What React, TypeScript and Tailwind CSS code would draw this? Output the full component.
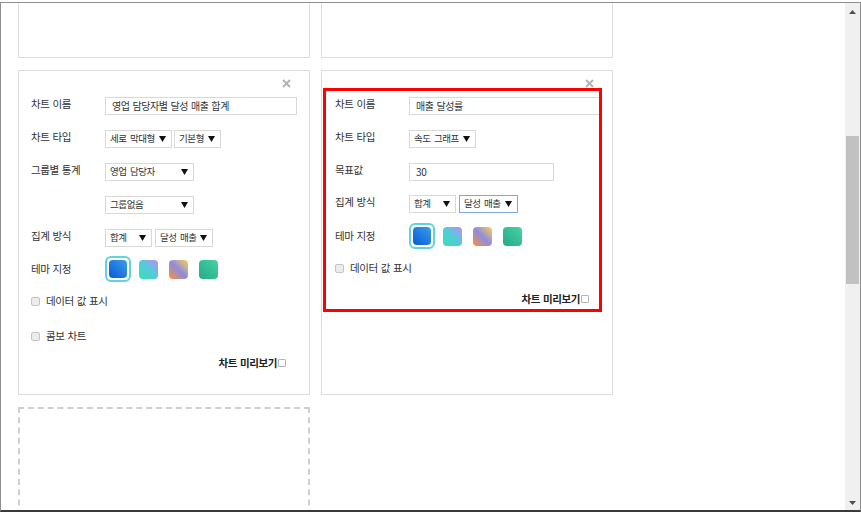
import clsx from 'clsx';

const font = { fontFamily: '"Noto Sans CJK KR", "Noto Sans", sans-serif' };

const Caret = () => (
  <svg width="7" height="6" viewBox="0 0 7 6" className="shrink-0">
    <polygon points="0,0 7,0 3.5,6" fill="#111" />
  </svg>
);

const Select: React.FC<{ w: string; label: string; focus?: boolean }> = ({ w, label, focus }) => (
  <div
    className={clsx(
      'h-[18px] flex items-center justify-between pl-[4px] pr-[5px] text-[9.5px] tracking-[-0.4px] [word-spacing:1.5px] text-[#333] bg-white border',
      focus ? 'border-[#7ea6e6]' : 'border-[#d8d8d8]',
      w,
    )}
  >
    <span className="leading-none whitespace-nowrap">{label}</span>
    <Caret />
  </div>
);

const TextInput: React.FC<{ w: string; value: string }> = ({ w, value }) => (
  <div
    className={clsx(
      'h-[18px] flex items-center pl-[6px] text-[10px] tracking-[-0.4px] [word-spacing:1px] text-[#333] border border-[#d8d8d8] bg-white',
      w,
    )}
  >
    <span className="leading-none whitespace-nowrap">{value}</span>
  </div>
);

const Row: React.FC<{ label?: string; className?: string; gap?: string; children: React.ReactNode }> = ({
  label,
  className,
  gap = 'gap-[2px]',
  children,
}) => (
  <div className={clsx('flex flex-row items-start', className)}>
    <span className="w-[74px] shrink-0 text-[10.5px] tracking-[-0.4px] [word-spacing:1px] leading-[14px] text-[#333]">
      {label}
    </span>
    <div className={clsx('flex flex-row', gap)}>{children}</div>
  </div>
);

const Swatches = () => (
  <div className="flex flex-row items-center">
    <div className="w-[26px] h-[26px] rounded-[6px] border-2 border-[#5fd3df] flex items-center justify-center">
      <div className="w-[18px] h-[18px] rounded-[4px] bg-[linear-gradient(225deg,#3a9ee9,#0a5ad6)]" />
    </div>
    <div className="ml-[8px] w-[19px] h-[19px] rounded-[4px] bg-[linear-gradient(225deg,#c08af2,#58c8de_45%,#36e2ad)]" />
    <div className="ml-[11px] w-[19px] h-[19px] rounded-[4px] bg-[linear-gradient(225deg,#ffd24a,#8e8ce0_50%,#ff8f34)]" />
    <div className="ml-[11px] w-[19px] h-[19px] rounded-[4px] bg-[linear-gradient(225deg,#45d3a2,#26a98a)]" />
  </div>
);

const Check: React.FC<{ label: string; className?: string }> = ({ label, className }) => (
  <div className={clsx('h-[14px] flex flex-row items-center', className)}>
    <span className="w-[9px] h-[9px] rounded-[2px] border border-[#c4c4c4] bg-[#ececec]" />
    <span className="ml-[6px] text-[10.5px] tracking-[-0.4px] [word-spacing:1px] leading-none text-[#333]">
      {label}
    </span>
  </div>
);

const Preview = () => (
  <div className="h-[14px] flex flex-row items-center justify-end pr-[23px]">
    <span className="text-[10.5px] tracking-[-0.4px] [word-spacing:1px] font-bold leading-none text-[#222]">
      차트 미리보기
    </span>
    <span className="ml-[1px] w-[8px] h-[8px] rounded-[1px] border border-[#b5b5b5] bg-white" />
  </div>
);

const Close = () => (
  <div className="h-[26px] flex flex-row items-center justify-end pr-[18px] pb-[2px]">
    <svg width="9" height="9" viewBox="0 0 9 9">
      <path d="M1 1 L8 8 M8 1 L1 8" stroke="#b4b4b4" strokeWidth="2" />
    </svg>
  </div>
);

const LeftCard = () => (
  <div className="h-[325px] border border-[#dcdcdc] bg-white flex flex-col pl-[12px]">
    <Close />
    <Row label="차트 이름">
      <TextInput w="w-[192px]" value="영업 담당자별 달성 매출 합계" />
    </Row>
    <Row label="차트 타입" className="mt-[15px]">
      <Select w="w-[67px]" label="세로 막대형" />
      <Select w="w-[47px]" label="기본형" />
    </Row>
    <Row label="그룹별 통계" className="mt-[15px]">
      <Select w="w-[89px]" label="영업 담당자" />
    </Row>
    <Row className="mt-[15px]">
      <Select w="w-[89px]" label="그룹없음" />
    </Row>
    <Row label="집계 방식" className="mt-[15px]" gap="gap-[3px]">
      <Select w="w-[47px]" label="합계" />
      <Select w="w-[58px]" label="달성 매출" />
    </Row>
    <div className="mt-[9px] h-[26px] flex flex-row items-center">
      <span className="w-[74px] text-[10.5px] tracking-[-0.4px] [word-spacing:1px] leading-[14px] text-[#333]">
        테마 지정
      </span>
      <Swatches />
    </div>
    <Check label="데이터 값 표시" className="mt-[12px]" />
    <Check label="콤보 차트" className="mt-[21px]" />
    <div className="mt-[13px]">
      <Preview />
    </div>
  </div>
);

const RightCard = () => (
  <div className="relative h-[325px] border border-[#dcdcdc] bg-white flex flex-col pl-[13px]">
    <Close />
    <Row label="차트 이름">
      <TextInput w="w-[192px]" value="매출 달성률" />
    </Row>
    <Row label="차트 타입" className="mt-[15px]">
      <Select w="w-[67px]" label="속도 그래프" />
    </Row>
    <Row label="목표값" className="mt-[15px]">
      <TextInput w="w-[145px]" value="30" />
    </Row>
    <Row label="집계 방식" className="mt-[14px]" gap="gap-[3px]">
      <Select w="w-[47px]" label="합계" />
      <Select w="w-[59px]" label="달성 매출" focus />
    </Row>
    <div className="mt-[10px] h-[26px] flex flex-row items-center">
      <span className="w-[74px] text-[10.5px] tracking-[-0.4px] [word-spacing:1px] leading-[14px] text-[#333]">
        테마 지정
      </span>
      <Swatches />
    </div>
    <Check label="데이터 값 표시" className="mt-[12px]" />
    <div className="mt-[17px]">
      <Preview />
    </div>
    <div className="absolute left-[1px] top-[17px] w-[279px] h-[224px] border-[3px] border-[#ff0000]" />
  </div>
);

const Scrollbar = () => (
  <div className="w-[15px] h-full bg-[#f0f0f0] flex flex-col items-center">
    <div className="h-[18px] flex items-center justify-center">
      <svg width="7" height="4" viewBox="0 0 7 4">
        <polygon points="0,4 7,4 3.5,0" fill="#505050" />
      </svg>
    </div>
    <div className="mt-[115px] w-[13px] h-[148px] bg-[#c1c1c1]" />
    <div className="flex-1" />
    <div className="h-[14px] flex items-center justify-center">
      <svg width="7" height="4" viewBox="0 0 7 4">
        <polygon points="0,0 7,0 3.5,4" fill="#505050" />
      </svg>
    </div>
  </div>
);

const App = () => {
  return (
    <div className="w-[861px] h-[512px] bg-white pt-[2px]" style={font}>
      <div className="h-[510px] flex flex-row border-t border-l border-r border-[#8e8e8e] border-b-2 border-b-[#3a3a3a]">
        <div className="flex-1 overflow-hidden pl-[17px]">
          <div className="grid grid-cols-[292px_292px] gap-x-[11px] gap-y-[12px]">
            <div className="h-[55px] border-l border-r border-b border-[#dcdcdc]" />
            <div className="h-[55px] border-l border-r border-b border-[#dcdcdc]" />
            <LeftCard />
            <RightCard />
            <div className="h-[150px] border-2 border-dashed border-[#cfcfcf]" />
          </div>
        </div>
        <Scrollbar />
      </div>
    </div>
  );
};

export default App;
